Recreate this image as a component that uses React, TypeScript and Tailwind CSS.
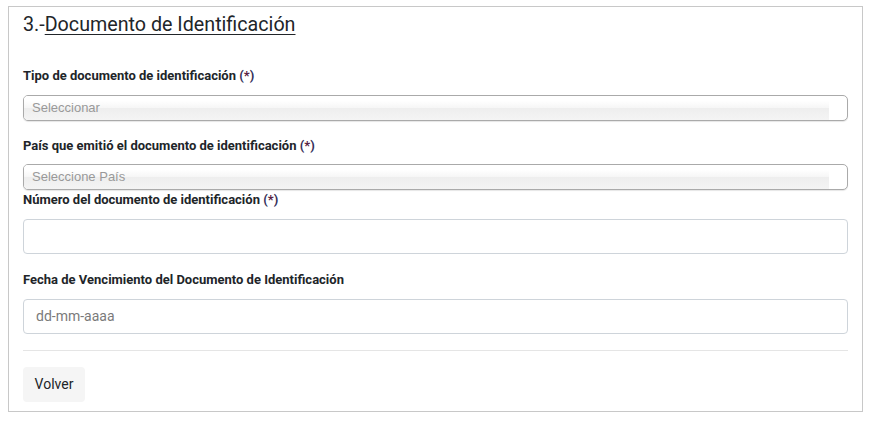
import React from "react";

const Req = () => (
  <span className="text-[#35305a]">
    (<span className="text-[#5a2242]">*</span>)
  </span>
);

const Label = ({ children, className = "" }: { children: React.ReactNode; className?: string }) => (
  <div className={`text-[13px] leading-[20px] font-bold text-[#212529] ${className}`}>{children}</div>
);

const FakeSelect = ({ text, className = "" }: { text: string; className?: string }) => (
  <div
    className={`relative h-[26px] rounded-[5px] border border-[#aaa] bg-white shadow-[0_1px_1px_rgba(0,0,0,0.1)] overflow-hidden ${className}`}
  >
    <div className="absolute left-0 top-0 bottom-0 right-[18px] bg-[linear-gradient(#fff_20%,#f6f6f6_50%,#eee_52%,#f4f4f4_100%)]" />
    <div className="relative pl-[8px] text-[13px] leading-[24px] text-[#999] font-['Liberation_Sans',Arial,sans-serif]">
      {text}
    </div>
  </div>
);

export default function App() {
  return (
    <div className="bg-white w-[878px] h-[422px] pt-[6px] pl-[8px] font-['Roboto',sans-serif]">
      <div className="w-[855px] h-[406px] border border-[#c8c8c8] px-[14px] pt-[6px] pb-[9px]">
        <h2 className="text-[19.7px] leading-[24px] text-[#212529] font-normal">
          3.-<span className="underline underline-offset-[3px] decoration-[1px]">Documento de Identificación</span>
        </h2>

        <Label className="mt-[29px]">
          Tipo de documento de identificación <Req />
        </Label>
        <FakeSelect text="Seleccionar" className="mt-[9px]" />

        <Label className="mt-[15px]">
          País que emitió el documento de identificación <Req />
        </Label>
        <FakeSelect text="Seleccione País" className="mt-[8px]" />

        <Label>
          Número del documento de identificación <Req />
        </Label>
        <div className="mt-[9px] h-[35px] rounded-[4px] border border-[#ced4da] bg-white" />

        <Label className="mt-[16px]">Fecha de Vencimiento del Documento de Identificación</Label>
        <div className="mt-[9px] h-[35px] rounded-[4px] border border-[#ced4da] bg-white flex items-center pl-[12px] text-[14px] text-[#7a7a7a]">
          dd-mm-aaaa
        </div>

        <div className="mt-[16px] border-t border-[#e5e5e5]" />

        <button className="mt-[16px] h-[35px] w-[62px] rounded-[4px] bg-[#f5f5f5] text-[14px] text-[#212529]">
          Volver
        </button>
      </div>
    </div>
  );
}
